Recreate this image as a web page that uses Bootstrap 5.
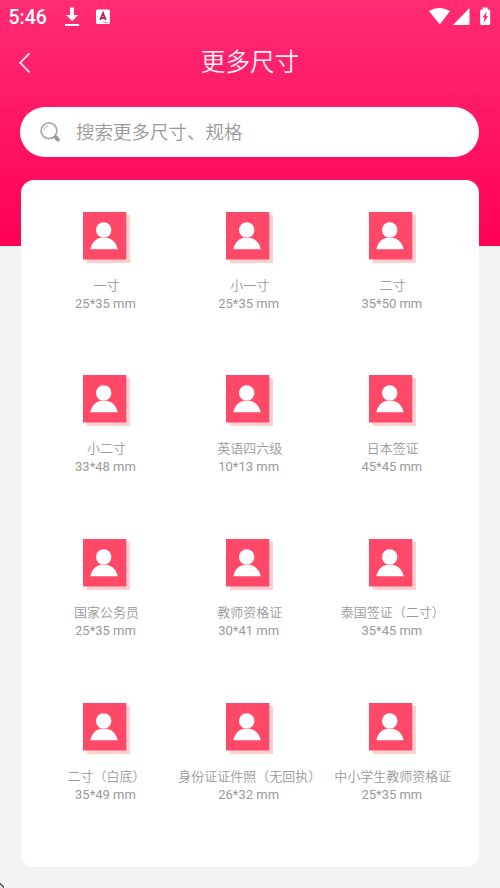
<!DOCTYPE html>
<html lang="zh-CN">
<head>
<meta charset="utf-8">
<meta name="viewport" content="width=device-width, initial-scale=1">
<title>更多尺寸</title>
<link href="https://cdn.jsdelivr.net/npm/bootstrap@5.3.0/dist/css/bootstrap.min.css" rel="stylesheet">
<style>
body{font-family:Roboto,"Noto Sans CJK SC",sans-serif;background:linear-gradient(#ff2c73 0,#ff0057 246px,#f3f3f3 246px) no-repeat #f3f3f3;height:888px;overflow:hidden}
.status-bar{height:34px;padding:0 7px 0 8.5px;font-size:19.5px;font-weight:500;line-height:34px}
.status-time{width:55.5px;padding-top:1px}
.title-bar{height:56px;padding:0 19px}
.title-text{font-size:24.6px;font-weight:350;line-height:56px;padding-top:1px;color:#fff0f5}
.search-box{margin:17px 21px 0 20px;height:50px;padding-left:19px;color:#999;font-size:18.5px;font-weight:350}
.search-hint{padding:4px 0 0 15px}
.size-panel{margin:22.5px 21.5px 0 21px;height:687px;border-radius:13px;padding:32px 15px 0 12.9px}
.size-item{height:163.7px;color:#999;font-weight:350}
.size-icon{margin-left:2px}
.size-name{font-size:13px;line-height:18px;margin-top:14px;padding-left:2px}
.size-dim{font-size:13px;font-weight:400;line-height:17px}
.corner-tick{left:0;bottom:0}
</style>
</head>
<body class="position-relative">
<header class="text-white">
  <div class="status-bar d-flex align-items-center">
    <span class="status-time">5:46</span>
    <svg width="16" height="20" viewBox="0 0 16 20" fill="#fff"><path d="M6 .5h4V8h4l-5.800 6.300L2.300 8H6zM1 17h14.200v2H1z"/></svg>
    <svg class="ms-3" width="14" height="16" viewBox="0 0 14 16"><rect y=".5" width="14" height="14.500" rx="1.500" fill="#fff"/><path d="M4.200 11 7 4.200 9.800 11M5.300 9h3.400" fill="none" stroke="#a92a55" stroke-width="1.800"/><path d="M7 13.300h5.500" stroke="#d98aa8"/></svg>
    <svg class="ms-auto" width="64" height="20" viewBox="0 0 64 20" fill="#fff"><path d="M0 4Q10-1.800 21 4L10.800 17.500zM40.500 1v17H24zM51.200 4q0-1.500 1.500-1.500h1v-2h5v2h1q1.500 0 1.500 1.500v12.800q0 1.200-1.500 1.200h-7q-1.500 0-1.500-1.200z"/><path d="m58 4.500-4.500 6h2.200l-1.400 5.500 4.700-6.800h-2.400z" fill="#e91f63"/></svg>
  </div>
  <nav class="title-bar position-relative d-flex justify-content-center">
    <svg class="position-absolute start-0 top-0" width="40" height="56" viewBox="0 0 40 56"><path d="m29.500 19.300-9.300 9.400 9.300 9.600" fill="none" stroke="#ffe1eb" stroke-width="1.900"/></svg>
    <h1 class="title-text m-0">更多尺寸</h1>
  </nav>
  <div class="search-box bg-white rounded-pill d-flex align-items-center">
    <svg width="22" height="22" viewBox="0 0 22 22" fill="none"><circle cx="10" cy="9.800" r="7.900" stroke="#aaa" stroke-width="1.800"/><path d="M5 9.400q.4-3.800 4-4.500" stroke="#c4c4c4" stroke-width="1.100"/><path d="m15 14.800 2 2" stroke="#aaa" stroke-width="2"/><path d="m16.800 16.400 2.200 2.200" stroke="#989898" stroke-width="3.800" stroke-linecap="round"/></svg>
    <span class="search-hint">搜索更多尺寸、规格</span>
  </div>
</header>
<svg class="d-none"><symbol id="portrait" viewBox="0 0 47 51"><path d="M4 3h43v48H4z" fill="#ffcfcf"/><path d="M0 0h43.300v47.500H0z" fill="#ff4969"/><circle cx="20.700" cy="18" r="7.700" fill="#fff"/><path d="M7.300 37.300C9 29 14.500 25.500 20.800 25.500S33 29 34.700 37.300z" fill="#fff"/><path d="M17 25.300q3.800 1.100 7.500 0" fill="none" stroke="#ff8ca1" stroke-width=".6"/></symbol></svg>
<main class="size-panel bg-white">
  <div class="row row-cols-3 g-0 text-center text-nowrap" id="sizes"></div>
</main>
<svg class="corner-tick position-absolute" width="5" height="5"><path d="M0 0h1v1h1v1h1v1h1v2H3V4H2V3H1V2H0z" fill="#555"/></svg>
<script>
const sizes=[["一寸","25*35"],["小一寸","25*35"],["二寸","35*50"],["小二寸","33*48"],["英语四六级","10*13"],["日本签证","45*45"],["国家公务员","25*35"],["教师资格证","30*41"],["泰国签证（二寸）","35*45"],["二寸（白底）","35*49"],["身份证证件照（无回执）","26*32"],["中小学生教师资格证","25*35"]];
document.getElementById("sizes").innerHTML=sizes.map(([name,dim])=>`<div class="col size-item d-flex flex-column align-items-center"><svg class="size-icon" width="47" height="51"><use href="#portrait"/></svg><div class="size-name">${name}</div><div class="size-dim">${dim} mm</div></div>`).join("");
</script>
<script src="https://cdn.jsdelivr.net/npm/bootstrap@5.3.0/dist/js/bootstrap.bundle.min.js"></script>
</body>
</html>
